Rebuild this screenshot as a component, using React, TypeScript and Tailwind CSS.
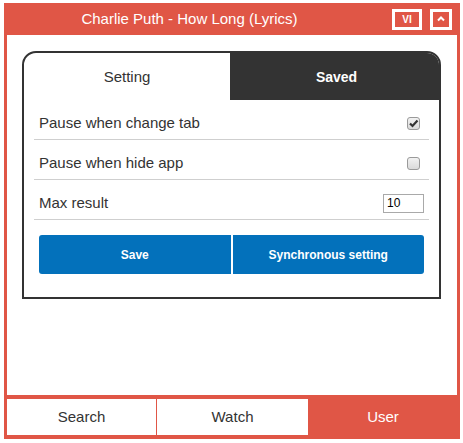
const font = { fontFamily: '"Liberation Sans", Arial, sans-serif' }

const rows = [
    { label: "Pause when change tab", type: "check", checked: true },
    { label: "Pause when hide app", type: "check", checked: false },
    { label: "Max result", type: "number", value: "10" },
]

function CheckBox({ checked }: { checked: boolean }) {
    return (
        <span className="mr-[4px] flex h-[13px] w-[13px] items-center justify-center rounded-[3px] border border-[#9a9a9a] bg-gradient-to-b from-[#f2f2f2] to-[#dadada]">
            {checked && (
                <svg width="11" height="11" viewBox="0 0 11 11">
                    <path d="M2 5.5 L4.5 8 L9.5 2.5" fill="none" stroke="#333" strokeWidth="2.2" />
                </svg>
            )}
        </span>
    )
}

export default function App() {
    return (
        <div className="pl-[4px] pt-[3px]" style={font}>
            <div className="flex h-[436px] w-[456px] flex-col bg-[#e05646] px-[3px] pb-[4px]">
                {/* title bar */}
                <header className="flex h-[32px] shrink-0 items-center text-white">
                    <div className="w-[365px] text-center text-[15px]">Charlie Puth - How Long (Lyrics)</div>
                    <div className="ml-[20px] flex h-[21px] w-[30px] items-center justify-center border-[3px] border-white text-[10px] font-bold">
                        VI
                    </div>
                    <div className="ml-[8px] flex h-[21px] w-[22px] items-center justify-center border-[3px] border-white">
                        <svg width="8" height="6" viewBox="0 0 8 6">
                            <path d="M1 4.5 L4 1.5 L7 4.5" fill="none" stroke="white" strokeWidth="2" />
                        </svg>
                    </div>
                </header>

                {/* content */}
                <main className="flex-1 bg-white pl-[15px] pr-[16px] pt-[16px]">
                    <div className="h-[248px] rounded-t-[14px] border-2 border-[#333] bg-white">
                        <div className="flex h-[47px]">
                            <div className="flex w-[206px] items-center justify-center pt-[1px] text-[15px] text-[#333]">Setting</div>
                            <div className="flex flex-1 items-center justify-center rounded-tr-[12px] bg-[#333] pl-[4px] pt-[1px] text-[14px] font-bold text-white">
                                Saved
                            </div>
                        </div>
                        <div className="px-[10px]">
                            {rows.map((r, k) => (
                                <div
                                    key={k}
                                    className="flex h-[40px] items-center justify-between border-b border-[#cfcfcf] pl-[5px] pr-[5px] pt-[7px] text-[15px] text-[#333]"
                                >
                                    <span>{r.label}</span>
                                    {r.type === "check" ? (
                                        <CheckBox checked={!!r.checked} />
                                    ) : (
                                        <input
                                            className="h-[19px] w-[41px] border border-[#a9a9a9] px-[3px] text-[12px] text-black outline-none"
                                            defaultValue={r.value}
                                        />
                                    )}
                                </div>
                            ))}
                            <div className="mx-[5px] mt-[15px] flex h-[39px] gap-[2px] text-[12px] font-bold text-white">
                                <button className="flex-1 rounded-l-[3px] bg-[#0371bb]">Save</button>
                                <button className="flex-1 rounded-r-[3px] bg-[#0371bb]">Synchronous setting</button>
                            </div>
                        </div>
                    </div>
                </main>

                {/* bottom nav */}
                <nav className="mt-[4px] grid h-[36px] shrink-0 grid-cols-[149px_151px_1fr] gap-[1px] text-[15px]">
                    <div className="flex items-center justify-center bg-white text-[#333]">Search</div>
                    <div className="flex items-center justify-center bg-white text-[#333]">Watch</div>
                    <div className="flex items-center justify-center text-white">User</div>
                </nav>
            </div>
        </div>
    )
}
